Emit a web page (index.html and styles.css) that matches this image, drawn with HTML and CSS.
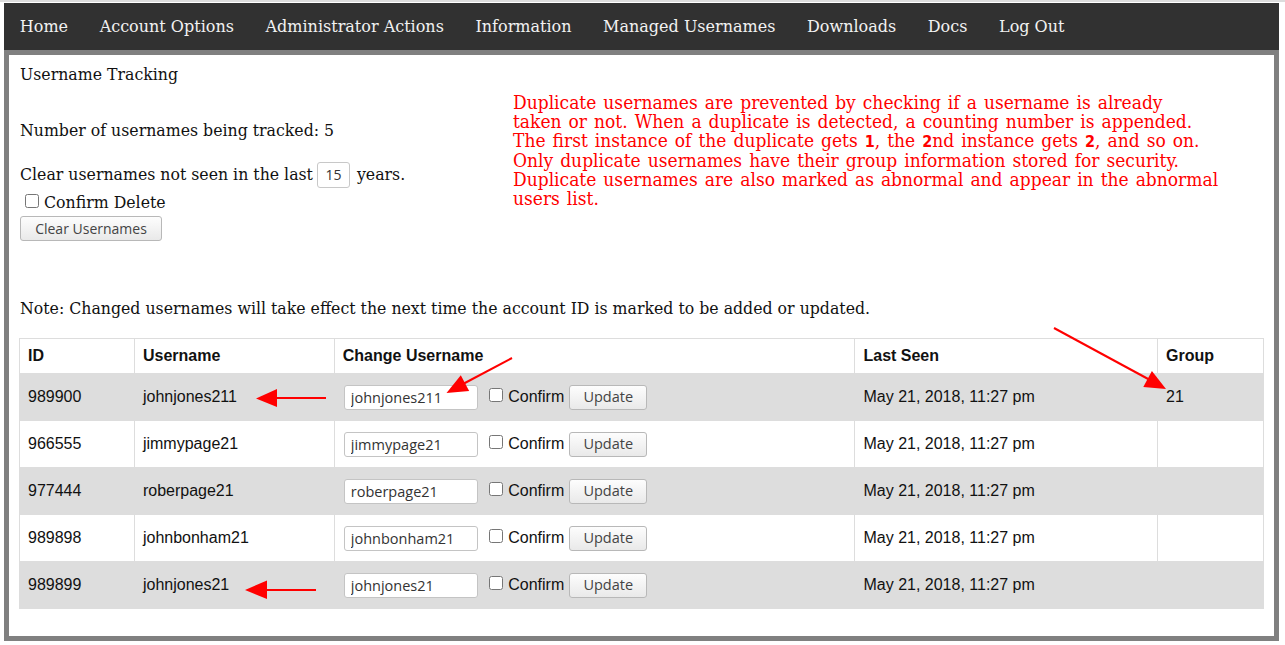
FILE: index.html
```html
<!DOCTYPE html>
<html>
<head>
<meta charset="utf-8">
<title>Username Tracking</title>
<link rel="stylesheet" href="styles.css">
</head>
<body>
<div class="page">
  <nav class="topnav">
    <a href="#">Home</a>
    <a href="#">Account Options</a>
    <a href="#">Administrator Actions</a>
    <a href="#">Information</a>
    <a href="#">Managed Usernames</a>
    <a href="#">Downloads</a>
    <a href="#">Docs</a>
    <a href="#">Log Out</a>
  </nav>
  <main class="frame">
    <div class="top">
      <div class="left">
        <p class="title">Username Tracking</p>
        <p class="count">Number of usernames being tracked: 5</p>
        <div class="clear-row">Clear usernames not seen in the last <input class="years" type="text" value="15"> years.</div>
        <label class="confirm-delete"><input type="checkbox" class="cb"> Confirm Delete</label>
        <button class="btn clear-btn">Clear Usernames</button>
      </div>
      <p class="notice">Duplicate usernames are prevented by checking if a username is already<br>taken or not. When a duplicate is detected, a counting number is appended.<br>The first instance of the duplicate gets <b class="num">1</b>, the <b class="num">2</b>nd instance gets <b class="num">2</b>, and so on.<br>Only duplicate usernames have their group information stored for security.<br>Duplicate usernames are also marked as abnormal and appear in the abnormal<br>users list.</p>
    </div>
    <p class="note">Note: Changed usernames will take effect the next time the account ID is marked to be added or updated.</p>
    <table class="users">
      <thead>
        <tr><th class="c-id">ID</th><th class="c-user">Username</th><th class="c-change">Change Username</th><th class="c-seen">Last Seen</th><th class="c-group">Group</th></tr>
      </thead>
      <tbody>
        <tr><td>989900</td><td>johnjones211</td><td><div class="change"><input class="uname" type="text" value="johnjones211"><label class="confirm"><input type="checkbox" class="cb"> Confirm</label><button class="btn upd">Update</button></div></td><td>May 21, 2018, 11:27 pm</td><td>21</td></tr>
        <tr><td>966555</td><td>jimmypage21</td><td><div class="change"><input class="uname" type="text" value="jimmypage21"><label class="confirm"><input type="checkbox" class="cb"> Confirm</label><button class="btn upd">Update</button></div></td><td>May 21, 2018, 11:27 pm</td><td></td></tr>
        <tr><td>977444</td><td>roberpage21</td><td><div class="change"><input class="uname" type="text" value="roberpage21"><label class="confirm"><input type="checkbox" class="cb"> Confirm</label><button class="btn upd">Update</button></div></td><td>May 21, 2018, 11:27 pm</td><td></td></tr>
        <tr><td>989898</td><td>johnbonham21</td><td><div class="change"><input class="uname" type="text" value="johnbonham21"><label class="confirm"><input type="checkbox" class="cb"> Confirm</label><button class="btn upd">Update</button></div></td><td>May 21, 2018, 11:27 pm</td><td></td></tr>
        <tr><td>989899</td><td>johnjones21</td><td><div class="change"><input class="uname" type="text" value="johnjones21"><label class="confirm"><input type="checkbox" class="cb"> Confirm</label><button class="btn upd">Update</button></div></td><td>May 21, 2018, 11:27 pm</td><td></td></tr>
      </tbody>
    </table>
  </main>
</div>
<svg class="arrows" width="1285" height="645" viewBox="0 0 1285 645" aria-hidden="true">
  <g stroke="#ff0000" stroke-width="2" fill="none">
    <line x1="326" y1="396" x2="272" y2="396"/>
    <line x1="512" y1="356" x2="463" y2="382"/>
    <line x1="1054" y1="326" x2="1150" y2="378"/>
    <line x1="316" y1="588" x2="262" y2="588"/>
  </g>
  <g fill="#ff0000">
    <polygon points="256,396.5 277,387 277,405"/>
    <polygon points="446.5,391 469.2,389 460.8,373.2"/>
    <polygon points="1166,387 1143.3,384.9 1151.9,369.1"/>
    <polygon points="245,588 267,578.5 267,597"/>
  </g>
</svg>
</body>
</html>
```

FILE: styles.css
```css
html, body {
  margin: 0;
  padding: 0;
  background: #ffffff;
}
body {
  width: 1285px;
  height: 645px;
  position: relative;
  overflow: hidden;
  border-top: 2px solid #dcdcdc;
  box-sizing: border-box;
}
.page {
  margin: 1px 6px 0 4px;
}
.topnav {
  background: #313131;
  height: 47px;
  display: flex;
  align-items: center;
}
.topnav a {
  color: #f2f2f2;
  text-decoration: none;
  font-family: "DejaVu Serif", serif;
  font-size: 16px;
  padding: 0 15.8px;
}
.frame {
  border: 5px solid #808080;
  height: 591px;
  box-sizing: border-box;
  padding: 10px 10px 0 10px;
  font-family: "DejaVu Serif", serif;
  font-size: 15.75px;
  color: #111;
}
.top {
  display: flex;
}
.left {
  width: 494px;
  flex: none;
  display: flex;
  flex-direction: column;
  align-items: flex-start;
}
.left p {
  margin: 0;
  line-height: 20px;
}
.title {
  padding-left: 1px;
}
.count {
  margin-top: 36px !important;
  padding-left: 1px;
}
.clear-row {
  margin-top: 20px;
  height: 27px;
  display: flex;
  align-items: center;
  padding-left: 1px;
  white-space: pre;
}
.years {
  width: 33px;
  height: 26px;
  box-sizing: border-box;
  border: 1px solid #c8c8c8;
  border-radius: 3px;
  font-family: "Open Sans", sans-serif;
  font-size: 14px;
  color: #333;
  text-align: center;
  padding: 0;
  margin: 0 2px 0 -1px;
}
.confirm-delete {
  display: flex;
  align-items: center;
  height: 21px;
  margin-top: 4px;
  padding-left: 6px;
  white-space: pre;
}
.cb {
  width: 14px;
  height: 14px;
  margin: 0;
  position: relative;
  top: -2px;
}
.btn {
  font-family: "Open Sans", sans-serif;
  font-size: 14.5px;
  color: #444;
  background: linear-gradient(#fdfdfd, #e9e9e9);
  border: 1px solid #b8b8b8;
  border-radius: 3px;
  height: 25px;
  padding: 0 13px;
  box-sizing: border-box;
  line-height: 22px;
  white-space: nowrap;
}
.clear-btn {
  margin-top: 3px;
  margin-left: 1px;
  width: 142px;
  padding: 0;
  font-size: 14px;
}
.notice {
  margin: 28px 0 0 0;
  color: #ff0000;
  font-family: "DejaVu Serif Condensed", "DejaVu Serif", serif;
  font-stretch: condensed;
  font-size: 19px;
  line-height: 19px;
  white-space: nowrap;
  word-spacing: 1.6px;
}
.notice .num {
  font-family: "DejaVu Sans", sans-serif;
  font-size: 16px;
}
.note {
  margin: 58px 0 0 0;
  line-height: 20px;
  padding-left: 1px;
}
.users {
  margin-top: 19px;
  width: 1245px;
  border-collapse: collapse;
  font-family: "Liberation Sans", Arial, sans-serif;
  font-size: 16px;
  color: #111;
}
.users th, .users td {
  border: 1px solid #dddddd;
  text-align: left;
  padding: 11px 8px;
  line-height: 24px;
  vertical-align: middle;
}
.users th {
  padding: 5px 8px;
}
.c-id { width: 98px; }
.c-user { width: 183px; }
.c-change { width: 504px; }
.c-seen { width: 286px; }
.c-group { width: 89px; }
.users tbody tr:nth-child(odd) td {
  background: #dddddd;
}
.change {
  display: flex;
  align-items: center;
  height: 24px;
  padding-left: 1px;
}
.uname {
  width: 134px;
  height: 25px;
  box-sizing: border-box;
  border: 1px solid #c4c4c4;
  border-radius: 3px;
  background: #fff;
  font-family: "Open Sans", sans-serif;
  font-size: 14.5px;
  color: #333;
  padding: 0 6px;
  margin: 0 11px 0 0;
}
.confirm {
  display: flex;
  align-items: center;
  white-space: pre;
  margin-right: 5px;
}
.confirm .cb {
  margin-right: 1px;
}
.upd {
  width: 78px;
  padding: 0;
}
.arrows {
  position: absolute;
  left: 0;
  top: 0;
  pointer-events: none;
}
```
